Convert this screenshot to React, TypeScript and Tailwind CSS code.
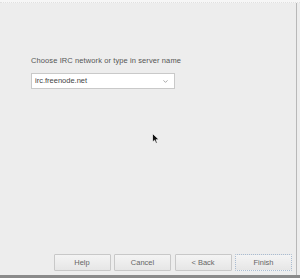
import { ChevronDown } from "lucide-react";

const buttons = ["Help", "Cancel", "< Back", "Finish"];

export default function App() {
  return (
    <div
      className="relative flex h-[278px] w-[300px] flex-col overflow-hidden bg-[#ededed] text-[#555]"
      style={{ fontFamily: '"Liberation Sans", Arial, sans-serif' }}
    >
      {/* dotted top edge */}
      <div className="h-[3px] border-b border-dotted border-[#e0e0e0] bg-[#f6f6f6]" />

      <div className="flex flex-1 border-r border-[#b8b8b8] mr-[3px]">
        <div className="flex flex-1 flex-col">
          <div className="flex flex-col pl-[31px] pt-[53px]">
            <p className="text-[7.5px] leading-[10px] tracking-[0.1px]">
              Choose IRC network or type in server name
            </p>
            <div className="mt-[7px] flex h-[16px] w-[144px] items-center justify-between border border-[#c9c9c9] bg-white pl-[3px] pr-[5px]">
              <span className="text-[7.5px] text-[#444]">irc.freenode.net</span>
              <ChevronDown className="h-[7px] w-[7px] text-[#888]" strokeWidth={2.5} />
            </div>
          </div>

          <div className="flex-1" />

          <div className="flex justify-end gap-[3.5px] pb-[4px] pr-[4px]">
            {buttons.map((b) => (
              <button
                key={b}
                className={
                  "h-[17px] w-[57px] rounded-[1px] border bg-gradient-to-b from-[#f4f4f4] to-[#e6e6e6] text-[7.5px] text-[#666] " +
                  (b === "Finish" ? "border-[#a9bcd2] border-dotted" : "border-[#c8c8c8]")
                }
              >
                {b}
              </button>
            ))}
          </div>
        </div>
      </div>

      {/* bottom frame */}
      <div className="h-[3px] bg-[#8a8a8a]" />

      {/* mouse pointer */}
      <svg className="absolute left-[152px] top-[133px]" width="8" height="11" viewBox="0 0 8 11">
        <path d="M0.5 0.5 L0.5 9 L2.6 7.2 L4 10.3 L5.3 9.7 L4 6.7 L7 6.7 Z" fill="#111" stroke="#fff" strokeWidth="0.7" />
      </svg>
    </div>
  );
}
